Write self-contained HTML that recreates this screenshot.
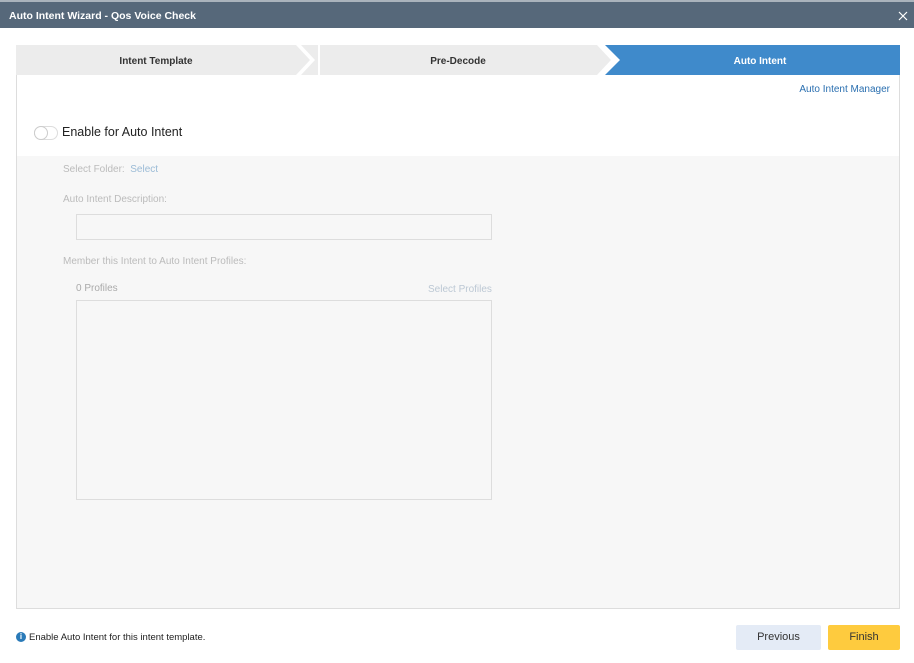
<!DOCTYPE html>
<html><head><style>
body{margin:0;width:914px;height:663px;background:#fff;font-family:"Liberation Sans",sans-serif;position:relative;overflow:hidden}
.hdr{position:absolute;left:0;top:0;width:914px;height:28px;background:#56687a;border-top:2px solid #aab3bc;box-sizing:border-box;color:#fff;font-size:10.5px;font-weight:bold}
.abs{position:absolute}
.lbl{font-size:10px;color:#bbb}
</style></head><body>
<div class="hdr"><span class="abs" style="left:9px;top:8px">Auto Intent Wizard - Qos Voice Check</span>
<svg class="abs" style="left:898px;top:9px" width="10" height="10"><path d="M1 1L9 9M9 1L1 9" stroke="#fff" stroke-width="1.2"/></svg></div>
<div class="abs" style="left:16px;top:45px;width:882px;height:562px;border:1px solid #ddd;background:#f7f7f7"></div>
<div class="abs" style="left:17px;top:75px;width:882px;height:81px;background:#fff"></div>
<svg class="abs" style="left:0;top:0" width="914" height="80">
<rect x="16" y="45" width="884" height="30" fill="#ececec"/>
<polygon points="296,45 301,45 315,60 301,75 296,75 310,60" fill="#fff"/>
<rect x="318" y="45" width="2" height="30" fill="#fff"/>
<polygon points="597,45 900,45 900,75 597,75 611,60" fill="#fff"/>
<polygon points="605,45 900,45 900,75 605,75 620,60" fill="#3f8acb"/>
<text x="156" y="64" font-size="10" font-weight="bold" text-anchor="middle" fill="#333" font-family="Liberation Sans">Intent Template</text>
<text x="458" y="64" font-size="10" font-weight="bold" text-anchor="middle" fill="#333" font-family="Liberation Sans">Pre-Decode</text>
<text x="760" y="64" font-size="10" font-weight="bold" text-anchor="middle" fill="#fff" font-family="Liberation Sans">Auto Intent</text>
</svg>
<div class="abs" style="left:794px;top:84px;width:96px;text-align:right;font-size:10px;color:#2a6fb0">Auto Intent Manager</div>
<div class="abs" style="left:34px;top:126px;width:22px;height:12px;border:1px solid #ddd;border-radius:7px;background:#fff"></div>
<div class="abs" style="left:34px;top:126px;width:12px;height:12px;border:1px solid #ccc;border-radius:50%;background:#fff"></div>
<div class="abs" style="left:62px;top:125px;font-size:12.5px;color:#222">Enable for Auto Intent</div>
<div class="abs lbl" style="left:63px;top:164px">Select Folder: <span style="color:#9bbbd6">&nbsp;Select</span></div>
<div class="abs lbl" style="left:63px;top:194px">Auto Intent Description:</div>
<div class="abs" style="left:76px;top:214px;width:414px;height:24px;border:1px solid #ddd;background:#f7f7f7"></div>
<div class="abs lbl" style="left:63px;top:256px">Member this Intent to Auto Intent Profiles:</div>
<div class="abs lbl" style="left:76px;top:283px;color:#aaa">0 Profiles</div>
<div class="abs lbl" style="left:428px;top:284px;color:#bcc8d4">Select Profiles</div>
<div class="abs" style="left:76px;top:300px;width:414px;height:198px;border:1px solid #ddd;background:#f7f7f7"></div>
<div class="abs" style="left:16px;top:632px;width:10px;height:10px;border-radius:50%;background:#2a7ab8;color:#fff;font-size:8px;font-weight:bold;text-align:center;line-height:10px">i</div>
<div class="abs" style="left:29px;top:632px;font-size:9.5px;color:#222">Enable Auto Intent for this intent template.</div>
<div class="abs" style="left:736px;top:625px;width:85px;height:25px;background:#e4ebf6;border-radius:2px;font-size:11px;color:#333;text-align:center;line-height:25px">Previous</div>
<div class="abs" style="left:828px;top:625px;width:72px;height:25px;background:#fecb3e;border-radius:2px;font-size:11px;color:#333;text-align:center;line-height:25px">Finish</div>
</body></html>
